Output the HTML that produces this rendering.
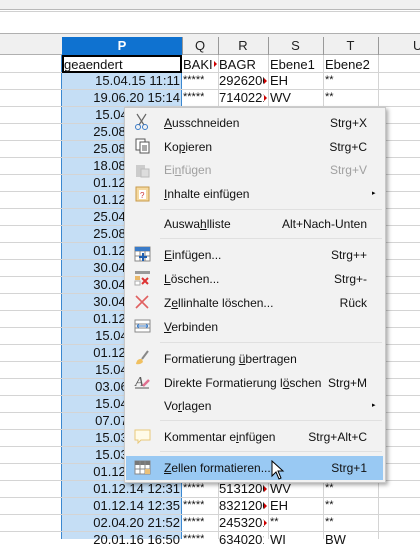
<!DOCTYPE html>
<html><head><meta charset="utf-8"><style>
*{margin:0;padding:0;box-sizing:border-box}
body{width:420px;height:539px;overflow:hidden;background:#fff;font-family:"Liberation Sans",Arial,sans-serif;position:relative}
.a{position:absolute}
.hl{position:absolute;left:0;width:420px;height:1px;background:#d4d4d4}
.vl{position:absolute;top:55px;height:484px;width:1px;background:#d4d4d4}
.c{position:absolute;font-size:13px;line-height:17px;height:17px;white-space:nowrap;overflow:hidden;color:#111}
.p{left:62px;width:118px;text-align:right}
.m{position:absolute;left:164px;font-size:12px;color:#111;white-space:nowrap}
.s{position:absolute;right:53px;font-size:12px;color:#111;white-space:nowrap;text-align:right}
.sep{position:absolute;left:160px;width:222px;height:1px;background:#e0e0e0}
.r{position:absolute;width:0;height:0;border-top:3px solid transparent;border-bottom:3px solid transparent;border-left:3px solid #c00}
u{text-decoration:underline}
</style></head><body>
<div class="a" style="left:0;top:0;width:420px;height:9px;background:#f0f0f0"></div>
<div class="a" style="left:0;top:9px;width:420px;height:1px;background:#b8b8b8"></div>
<div class="a" style="left:0;top:11px;width:420px;height:1px;background:#d0d0d0"></div>
<div class="a" style="left:0;top:33px;width:420px;height:1px;background:#b0b0b0"></div>
<div class="a" style="left:0;top:34px;width:420px;height:21px;background:#f0f0f0"></div>
<div class="a" style="left:0;top:54px;width:420px;height:1px;background:#b0b0b0"></div>
<div class="a" style="left:62px;top:37px;width:120px;height:18px;background:#0f72d0;color:#fff;font-size:13px;text-align:center;line-height:18px;font-weight:bold">P</div>
<div class="a" style="left:182px;top:37px;width:1px;height:18px;background:#999"></div>
<div class="a" style="left:218px;top:37px;width:1px;height:18px;background:#999"></div>
<div class="a" style="left:268px;top:37px;width:1px;height:18px;background:#999"></div>
<div class="a" style="left:323px;top:37px;width:1px;height:18px;background:#999"></div>
<div class="a" style="left:378px;top:37px;width:1px;height:18px;background:#999"></div>
<div class="a" style="left:182px;top:37px;width:36px;text-align:center;font-size:13px;line-height:18px;color:#222">Q</div>
<div class="a" style="left:218px;top:37px;width:50px;text-align:center;font-size:13px;line-height:18px;color:#222">R</div>
<div class="a" style="left:268px;top:37px;width:55px;text-align:center;font-size:13px;line-height:18px;color:#222">S</div>
<div class="a" style="left:323px;top:37px;width:55px;text-align:center;font-size:13px;line-height:18px;color:#222">T</div>
<div class="a" style="left:413px;top:37px;font-size:13px;line-height:18px;color:#222">U</div>
<div class="a" style="left:62px;top:72px;width:120px;height:467px;background:#c5def5"></div>
<div class="a" style="left:61px;top:55px;width:1px;height:484px;background:#3b88d0"></div>
<div class="a" style="left:181px;top:55px;width:1px;height:484px;background:#3b88d0"></div>
<div class="hl" style="top:72px"></div><div class="hl" style="top:89px"></div><div class="hl" style="top:106px"></div><div class="hl" style="top:123px"></div><div class="hl" style="top:140px"></div><div class="hl" style="top:157px"></div><div class="hl" style="top:174px"></div><div class="hl" style="top:191px"></div><div class="hl" style="top:208px"></div><div class="hl" style="top:225px"></div><div class="hl" style="top:242px"></div><div class="hl" style="top:259px"></div><div class="hl" style="top:276px"></div><div class="hl" style="top:293px"></div><div class="hl" style="top:310px"></div><div class="hl" style="top:327px"></div><div class="hl" style="top:344px"></div><div class="hl" style="top:361px"></div><div class="hl" style="top:378px"></div><div class="hl" style="top:395px"></div><div class="hl" style="top:412px"></div><div class="hl" style="top:429px"></div><div class="hl" style="top:446px"></div><div class="hl" style="top:463px"></div><div class="hl" style="top:480px"></div><div class="hl" style="top:497px"></div><div class="hl" style="top:514px"></div><div class="hl" style="top:531px"></div>
<div class="vl" style="left:218px"></div><div class="vl" style="left:268px"></div><div class="vl" style="left:323px"></div><div class="vl" style="left:378px"></div>
<div class="a" style="left:62px;top:55px;width:120px;height:18px;background:#fff;border:2px solid #000"></div>
<div class="c" style="left:64px;top:56px">geaendert</div>
<div class="c" style="left:183px;top:56px;width:32px">BAKI</div><div class="r" style="left:214px;top:61px"></div>
<div class="c" style="left:219px;top:56px">BAGR</div>
<div class="c" style="left:270px;top:56px">Ebene1</div>
<div class="c" style="left:325px;top:56px">Ebene2</div>
<div class="c p" style="top:72px">15.04.15 11:11</div><div class="c" style="left:183px;top:72px;font-size:11px">*****</div><div class="c" style="left:219px;top:72px;width:45px">2926200</div><div class="r" style="left:264px;top:78px"></div><div class="c" style="left:270px;top:72px">EH</div><div class="c" style="left:325px;top:72px;font-size:11px">**</div>
<div class="c p" style="top:89px">19.06.20 15:14</div><div class="c" style="left:183px;top:89px;font-size:11px">*****</div><div class="c" style="left:219px;top:89px;width:45px">7140221</div><div class="r" style="left:264px;top:95px"></div><div class="c" style="left:270px;top:89px">WV</div><div class="c" style="left:325px;top:89px;font-size:11px">**</div>
<div class="c p" style="top:106px">15.04.15 11:11</div><div class="c p" style="top:123px">25.08.15 10:10</div><div class="c p" style="top:140px">25.08.15 10:10</div><div class="c p" style="top:157px">18.08.15 10:10</div><div class="c p" style="top:174px">01.12.14 12:31</div><div class="c p" style="top:191px">01.12.14 12:31</div><div class="c p" style="top:208px">25.04.15 10:10</div><div class="c p" style="top:225px">25.08.15 10:10</div><div class="c p" style="top:242px">01.12.14 12:31</div><div class="c p" style="top:259px">30.04.15 10:10</div><div class="c p" style="top:276px">30.04.15 10:10</div><div class="c p" style="top:293px">30.04.15 10:10</div><div class="c p" style="top:310px">01.12.14 12:31</div><div class="c p" style="top:327px">15.04.15 11:11</div><div class="c p" style="top:344px">01.12.14 12:31</div><div class="c p" style="top:361px">15.04.15 11:11</div><div class="c p" style="top:378px">03.06.15 11:11</div><div class="c p" style="top:395px">15.04.15 11:11</div><div class="c p" style="top:412px">07.07.15 11:11</div><div class="c p" style="top:429px">15.03.15 11:11</div><div class="c p" style="top:446px">15.03.15 11:11</div><div class="c p" style="top:463px">01.12.14 12:31</div>
<div class="c p" style="top:480px">01.12.14 12:31</div><div class="c" style="left:183px;top:480px;font-size:11px">*****</div><div class="c" style="left:219px;top:480px;width:45px">5131200</div><div class="r" style="left:264px;top:486px"></div><div class="c" style="left:270px;top:480px">WV</div><div class="c" style="left:325px;top:480px;font-size:11px">**</div>
<div class="c p" style="top:497px">01.12.14 12:35</div><div class="c" style="left:183px;top:497px;font-size:11px">*****</div><div class="c" style="left:219px;top:497px;width:45px">8321200</div><div class="r" style="left:264px;top:503px"></div><div class="c" style="left:270px;top:497px">EH</div><div class="c" style="left:325px;top:497px;font-size:11px">**</div>
<div class="c p" style="top:514px">02.04.20 21:52</div><div class="c" style="left:183px;top:514px;font-size:11px">*****</div><div class="c" style="left:219px;top:514px;width:45px">2453201</div><div class="r" style="left:264px;top:520px"></div><div class="c" style="left:270px;top:514px;font-size:11px">**</div><div class="c" style="left:325px;top:514px;font-size:11px">**</div>
<div class="c p" style="top:531px">20.01.16 16:50</div><div class="c" style="left:183px;top:531px;font-size:11px">*****</div><div class="c" style="left:219px;top:531px;width:45px">6340201</div><div class="c" style="left:270px;top:531px">WI</div><div class="c" style="left:325px;top:531px">BW</div>
<div class="a" style="left:124px;top:107px;width:262px;height:376px;background:#f2f2f2;border:1px solid #c8c8c8;box-shadow:2px 2px 4px rgba(0,0,0,.35)"></div>
<div class="a" style="left:126px;top:456px;width:257px;height:24px;background:#99c9f3"></div>
<div class="m" style="top:116px"><u>A</u>usschneiden</div><div class="s" style="top:116px">Strg+X</div>
<div class="m" style="top:140px">Ko<u>p</u>ieren</div><div class="s" style="top:140px">Strg+C</div>
<div class="m" style="top:163px;color:#a0a0a0">Ei<u>n</u>fügen</div><div class="s" style="top:163px;color:#a0a0a0">Strg+V</div>
<div class="m" style="top:187px"><u>I</u>nhalte einfügen</div><div class="a" style="left:372px;top:189px;font-size:7px">▸</div>
<div class="sep" style="top:209px"></div>
<div class="m" style="top:217px">Auswa<u>h</u>lliste</div><div class="s" style="top:217px">Alt+Nach-Unten</div>
<div class="sep" style="top:238px"></div>
<div class="m" style="top:248px"><u>E</u>infügen...</div><div class="s" style="top:248px">Strg++</div>
<div class="m" style="top:272px"><u>L</u>öschen...</div><div class="s" style="top:272px">Strg+-</div>
<div class="m" style="top:296px">Z<u>e</u>llinhalte löschen...</div><div class="s" style="top:296px">Rück</div>
<div class="m" style="top:320px"><u>V</u>erbinden</div>
<div class="sep" style="top:342px"></div>
<div class="m" style="top:352px">Formatierung <u>ü</u>bertragen</div>
<div class="m" style="top:376px">Direkte Formatierung l<u>ö</u>schen</div><div class="s" style="top:376px">Strg+M</div>
<div class="m" style="top:399px">Vo<u>r</u>lagen</div><div class="a" style="left:372px;top:401px;font-size:7px">▸</div>
<div class="sep" style="top:420px"></div>
<div class="m" style="top:430px">Kommentar e<u>i</u>nfügen</div><div class="s" style="top:430px">Strg+Alt+C</div>
<div class="sep" style="top:451px"></div>
<div class="m" style="top:461px"><u>Z</u>ellen formatieren...</div><div class="s" style="top:461px">Strg+1</div>
<svg class="a" style="left:133px;top:113px" width="18" height="18"><path d="M4 1 L11 12 M13 1 L6 12" stroke="#666" fill="none" stroke-width="1.2"/><circle cx="5" cy="14" r="2.5" stroke="#3a7bc8" fill="none"/><circle cx="12" cy="14" r="2.5" stroke="#3a7bc8" fill="none"/></svg>
<svg class="a" style="left:135px;top:138px" width="16" height="16"><rect x="1" y="1" width="9" height="11" fill="#fff" stroke="#555"/><rect x="5" y="4" width="9" height="11" fill="#fff" stroke="#555"/><path d="M7 8h5M7 10h5M7 12h5" stroke="#555"/></svg>
<svg class="a" style="left:135px;top:162px" width="16" height="16"><rect x="1" y="3" width="9" height="12" fill="#ccc"/><rect x="6" y="7" width="8" height="8" fill="#ddd" stroke="#bbb"/></svg>
<svg class="a" style="left:135px;top:185px" width="16" height="17"><rect x="1" y="2" width="13" height="14" fill="#f5d9a0" stroke="#c89a4a"/><rect x="4" y="5" width="7" height="9" fill="#fff"/><text x="5" y="13" font-size="8" fill="#c33" font-family="Liberation Sans">?</text></svg>
<svg class="a" style="left:134px;top:246px" width="17" height="16"><rect x="1" y="1" width="15" height="14" fill="#fff" stroke="#888"/><path d="M1 5h15M1 10h15M6 1v14M11 1v14" stroke="#888"/><rect x="1" y="1" width="15" height="4" fill="#3a7bc8"/><path d="M5 11h8M9 7v8" stroke="#1f5fb0" stroke-width="2"/></svg>
<svg class="a" style="left:134px;top:270px" width="17" height="16"><rect x="1" y="1" width="15" height="3" fill="#999"/><rect x="1" y="6" width="5" height="4" fill="#e9b86a"/><rect x="1" y="11" width="5" height="4" fill="#fff" stroke="#aaa"/><path d="M8 8l6 6M14 8l-6 6" stroke="#d33" stroke-width="2"/></svg>
<svg class="a" style="left:134px;top:294px" width="16" height="16"><path d="M2 2L14 14M14 2L2 14" stroke="#e06060" stroke-width="1.6"/></svg>
<svg class="a" style="left:134px;top:318px" width="17" height="16"><rect x="1" y="2" width="15" height="12" fill="#fff" stroke="#888"/><path d="M1 6h15M1 10h15" stroke="#888"/><path d="M3 8h11M3 8l2-2M3 8l2 2M14 8l-2-2M14 8l-2 2" stroke="#3a7bc8"/></svg>
<svg class="a" style="left:134px;top:350px" width="16" height="16"><path d="M14 1L8 9" stroke="#888" stroke-width="2"/><path d="M2 14 Q3 8 8 9 L9 12 Q6 15 2 14z" fill="#f0c060"/></svg>
<svg class="a" style="left:134px;top:373px" width="17" height="17"><text x="1" y="13" font-size="14" font-style="italic" fill="#555" font-family="Liberation Serif">A</text><path d="M1 15h14" stroke="#555"/><path d="M9 13l6-6" stroke="#e07090" stroke-width="2.5"/></svg>
<svg class="a" style="left:134px;top:428px" width="17" height="17"><path d="M1 2h15v10H7l-3 3v-3H1z" fill="#fffbe8" stroke="#e8c87a"/></svg>
<svg class="a" style="left:134px;top:460px" width="17" height="15"><rect x="1" y="1" width="15" height="13" fill="#fff" stroke="#888"/><rect x="1" y="1" width="15" height="4" fill="#777"/><path d="M1 9h15M6 1v13M11 1v13" stroke="#888"/><rect x="11" y="9" width="5" height="5" fill="#e9c07a"/></svg>
<svg class="a" style="left:271px;top:460px" width="16" height="22"><path d="M1 1L1 16L5 12L8 19L10 18L7 11L12 11Z" fill="#fff" stroke="#000"/></svg>
</body></html>
